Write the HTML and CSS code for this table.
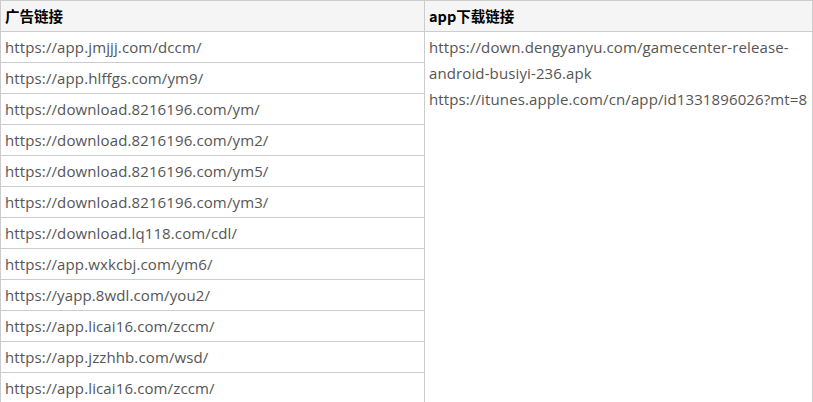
FILE: index.html
```html
<!DOCTYPE html>
<html lang="zh-CN">
<head>
  <meta charset="UTF-8" />
  <title>链接</title>
  <link rel="stylesheet" href="styles.css">
</head>
<body>
  <table class="link-table">
    <thead>
      <tr>
        <th class="col-ad">广告链接</th>
        <th>app下载链接</th>
      </tr>
    </thead>
    <tbody>
      <tr>
        <td>https://app.jmjjj.com/dccm/</td>
        <td rowspan="12" class="app-links">https://down.dengyanyu.com/gamecenter-release-android-busiyi-236.apk<br>https://itunes.apple.com/cn/app/id1331896026?mt=8</td>
      </tr>
      <tr><td>https://app.hlffgs.com/ym9/</td></tr>
      <tr><td>https://download.8216196.com/ym/</td></tr>
      <tr><td>https://download.8216196.com/ym2/</td></tr>
      <tr><td>https://download.8216196.com/ym5/</td></tr>
      <tr><td>https://download.8216196.com/ym3/</td></tr>
      <tr><td>https://download.lq118.com/cdl/</td></tr>
      <tr><td>https://app.wxkcbj.com/ym6/</td></tr>
      <tr><td>https://yapp.8wdl.com/you2/</td></tr>
      <tr><td>https://app.licai16.com/zccm/</td></tr>
      <tr><td>https://app.jzzhhb.com/wsd/</td></tr>
      <tr><td>https://app.licai16.com/zccm/</td></tr>
    </tbody>
  </table>
</body>
</html>
```

FILE: styles.css
```css
* {
  box-sizing: border-box;
  margin: 0;
  padding: 0;
}

body {
  font-family: 'Open Sans', 'Noto Sans CJK SC', sans-serif;
  background-color: white;
}

.link-table {
  border-collapse: collapse;
  width: 813px;
  table-layout: fixed;
}

.link-table th,
.link-table td {
  border: 1px solid #cccccc;
  text-align: left;
  vertical-align: top;
  padding: 2px 4px;
  line-height: 26px;
}

.link-table th {
  background-color: #f5f5f5;
  color: #000;
  font-size: 14.5px;
  font-weight: bold;
  font-family: 'Noto Sans CJK SC', sans-serif;
}

.col-ad {
  width: 424px;
}

.link-table td {
  font-size: 15px;
  letter-spacing: 0.12px;
  color: #555555;
}
```
